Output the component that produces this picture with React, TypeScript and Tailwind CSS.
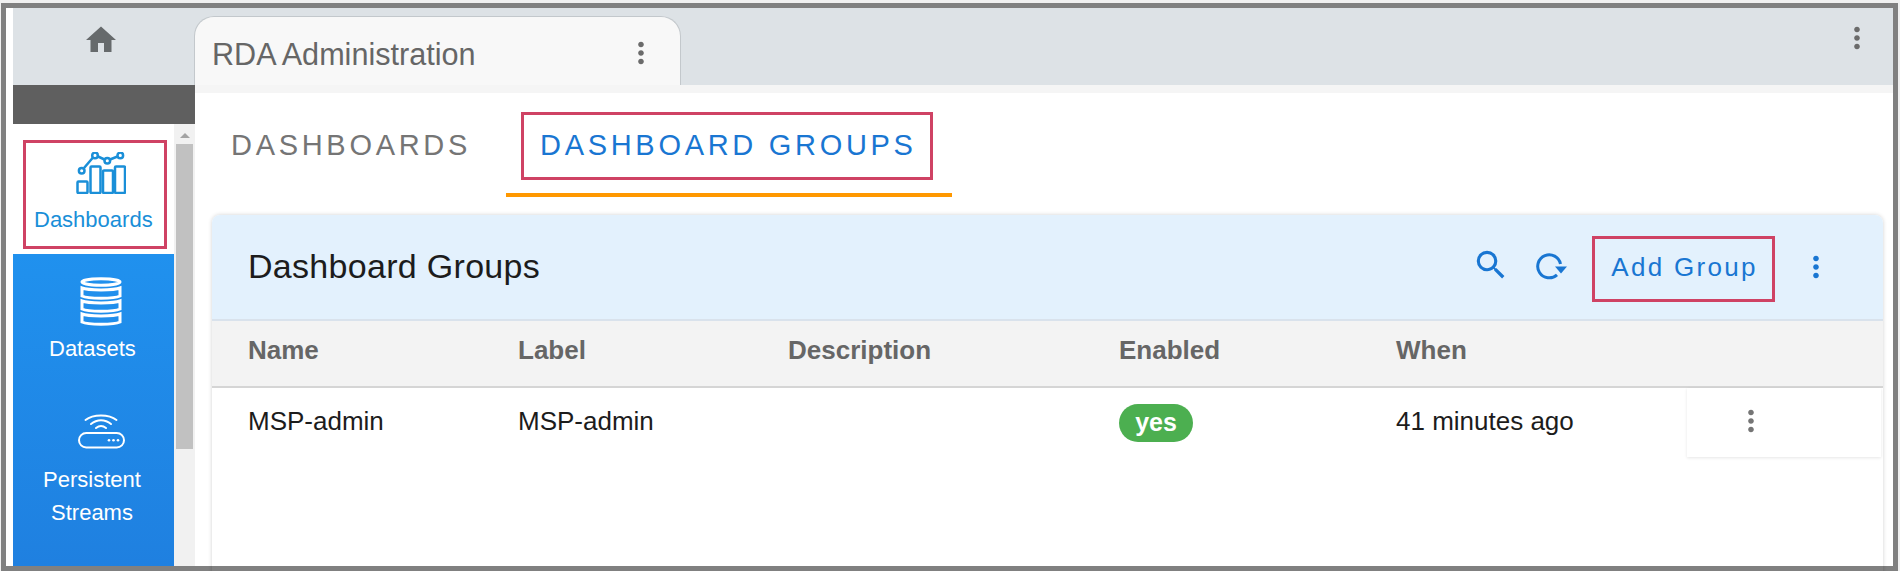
import { MdHome, MdMoreVert, MdSearch } from "react-icons/md";

const sans = "font-['Liberation_Sans',Arial,sans-serif]";

function ChartIcon() {
  return (
    <svg width="50" height="42" viewBox="0 0 50 42" fill="none" stroke="#1a8fd8" strokeWidth="2.5">
      <rect x="1.5" y="29.5" width="10" height="11.5" rx="1" />
      <rect x="14.5" y="14.5" width="10" height="26.5" rx="1" />
      <rect x="27" y="18.5" width="10" height="22.5" rx="1" />
      <rect x="39" y="14.5" width="10" height="26.5" rx="1" />
      <path d="M8 16 L17 5.5 M22 4.5 L28.5 7.5 M34 7.5 L41.5 4.5" />
      <circle cx="5.7" cy="18.7" r="2.8" />
      <circle cx="19" cy="3.4" r="2.8" />
      <circle cx="31.3" cy="8.7" r="2.8" />
      <circle cx="44.3" cy="3.4" r="2.8" />
    </svg>
  );
}

function DatabaseIcon() {
  return (
    <svg width="42" height="50" viewBox="0 0 42 50" fill="none" stroke="#fff" strokeWidth="3">
      <ellipse cx="21" cy="5" rx="19" ry="3.2" />
      {[11, 24, 37].map((y) => (
        <path key={y} d={`M2 ${y} C8 ${y + 2.5} 34 ${y + 2.5} 40 ${y} V${y + 8} C34 ${y + 11} 8 ${y + 11} 2 ${y + 8} Z`} />
      ))}
    </svg>
  );
}

function RouterIcon() {
  return (
    <svg width="48" height="36" viewBox="0 0 48 36" fill="none" stroke="#fff" strokeWidth="2" strokeLinecap="round">
      <path d="M7.5 7 C15 1 31 1 38.5 7" />
      <path d="M13 11 C19 6 27 6 33 11" />
      <path d="M18 15 C21 12.5 25 12.5 28 15" />
      <rect x="1" y="20" width="45" height="14.5" rx="7.25" />
      <circle cx="31" cy="27.3" r="1.3" fill="#fff" stroke="none" />
      <circle cx="35.5" cy="27.3" r="1.3" fill="#fff" stroke="none" />
      <circle cx="40" cy="27.3" r="1.3" fill="#fff" stroke="none" />
    </svg>
  );
}

function RefreshIcon() {
  return (
    <svg width="32" height="28" viewBox="0 0 32 28" fill="none">
      <path d="M21 21.8 A11.5 11.5 0 1 1 24.5 11" stroke="#1976d2" strokeWidth="3" />
      <path d="M19 13.5 H31 L25 20.5 Z" fill="#1976d2" />
    </svg>
  );
}

export default function App() {
  return (
    <div className={`h-[571px] w-[1900px] overflow-hidden bg-[#f0f0f0] pt-[3px] pl-[1px] pr-[2px] ${sans}`}>
      <div className="flex h-[568px] border-[5px] border-[#808080] bg-white pl-[7px]">
        {/* Left rail */}
        <aside className="flex w-[182px] flex-none flex-col">
          <div className="flex h-[77px] flex-none justify-center bg-[#dde2e6] pr-[7px] pt-[14px]">
            <MdHome size={36} className="text-[#666a6c]" />
          </div>
          <div className="h-[39px] flex-none bg-[#5f5f5f]" />
          <div className="flex min-h-0 flex-1">
            <nav className="flex w-[161px] flex-none flex-col">
              <div className="h-[130px] flex-none bg-white pl-[10px] pt-[16px]">
                <div className="flex h-[109px] w-[144px] flex-col border-[3px] border-[#cf4264] pl-[8px] pt-[9px]">
                  <div className="pl-[42px]">
                    <ChartIcon />
                  </div>
                  <span className="mt-[14px] text-[22px] leading-[24px] text-[#1a8fd8]">Dashboards</span>
                </div>
              </div>
              <div className="flex-1 bg-gradient-to-b from-[#2091ee] to-[#1f80e0] text-white">
                <div className="pl-[67px] pt-[23px]">
                  <DatabaseIcon />
                </div>
                <div className="mt-[10px] pl-[36px] text-[22px] leading-[24px]">Datasets</div>
                <div className="pl-[65px] pt-[52px]">
                  <RouterIcon />
                </div>
                <div className="mt-[14px] w-[158px] text-center text-[22px] leading-[33px]">
                  Persistent
                  <br />
                  Streams
                </div>
              </div>
            </nav>
            {/* Scrollbar */}
            <div className="flex w-[21px] flex-none flex-col bg-[#f1f1f1] pr-[2px] pl-[2px]">
              <div className="mx-auto mt-[9px] h-0 w-0 border-x-[5px] border-b-[5px] border-x-transparent border-b-[#a3a3a3]" />
              <div className="mt-[6px] h-[305px] bg-[#c1c1c1]" />
            </div>
          </div>
        </aside>

        {/* Main column */}
        <main className="flex min-w-0 flex-1 flex-col">
          <div className="flex h-[77px] flex-none items-end justify-between bg-[#dde2e6]">
            <div className="-ml-[1px] flex h-[69px] w-[487px] items-center justify-between rounded-t-[20px] border-x border-t border-[#c3c8cc] border-b-0 bg-[#f8f8f8] pl-[17px] pr-[22px]">
              <span className="pt-[5px] text-[30.6px] leading-[36px] text-[#666]">RDA Administration</span>
              <MdMoreVert size={34} className="mt-[4px] text-[#6b6b6b]" />
            </div>
            <MdMoreVert size={34} className="mb-[30px] mr-[19px] text-[#6b6b6b]" />
          </div>
          <div className="h-[8px] flex-none bg-[#f5f5f5]" />

          {/* Tabs */}
          <div className="flex h-[122px] flex-none">
            <div className="w-[311px] flex-none pl-[36px] pt-[31px] text-[29px] leading-[42px] tracking-[3.7px] text-[#757575]">
              DASHBOARDS
            </div>
            <div className="w-[446px] flex-none">
              <div className="ml-[15px] mt-[19px] flex h-[68px] w-[412px] items-center border-[3px] border-[#cf4264] pl-[16px] text-[29px] tracking-[3.7px] text-[#1976d2]">
                DASHBOARD GROUPS
              </div>
              <div className="mt-[13px] h-[4px] bg-[#ff9800]" />
            </div>
          </div>

          {/* Card */}
          <div className="ml-[17px] mr-[10px] h-[400px] flex-none overflow-hidden rounded-t-[8px] shadow-[0_0_4px_rgba(0,0,0,0.18)]">
            <div className="flex h-[106px] items-center justify-between border-b-2 border-[#d9e2ec] bg-[#e3f1fd] pl-[36px] pr-[50px]">
              <h2 className="pb-[2px] text-[34px] leading-[40px] tracking-[0.3px] text-[#1c1c1c]">Dashboard Groups</h2>
              <div className="flex items-center">
                <MdSearch size={38} className="mb-[4px] mr-[26px] text-[#1976d2]" />
                <div className="mr-[24px]">
                  <RefreshIcon />
                </div>
                <div className="mt-[4px] flex h-[66px] w-[183px] items-center justify-center border-[3px] border-[#cf4264] pb-[3px] pl-[2px] text-[26px] tracking-[2.3px] text-[#1976d2]">
                  Add Group
                </div>
                <MdMoreVert size={34} className="ml-[24px] text-[#1976d2]" />
              </div>
            </div>
            <div className="grid h-[67px] grid-cols-[270px_270px_331px_277px_1fr] items-center border-b-2 border-[#d5d5d5] bg-[#f3f3f3] pb-[6px] pl-[36px] text-[26px] font-bold text-[#666]">
              <span>Name</span>
              <span>Label</span>
              <span>Description</span>
              <span>Enabled</span>
              <span>When</span>
            </div>
            <div className="grid h-[69px] grid-cols-[270px_270px_331px_277px_291px_194px] items-center bg-white pl-[36px] text-[26px] text-[#1c1c1c]">
              <span className="-mt-[2px]">MSP-admin</span>
              <span className="-mt-[2px]">MSP-admin</span>
              <span />
              <span>
                <span className="inline-flex h-[38px] w-[74px] items-center justify-center rounded-[19px] bg-[#4caf50] pb-[2px] text-[25px] font-bold text-white">
                  yes
                </span>
              </span>
              <span className="-mt-[2px]">41 minutes ago</span>
              <div className="flex h-[69px] items-center pl-[47px] shadow-[0_1px_3px_rgba(0,0,0,0.1)]">
                <MdMoreVert size={34} className="-mt-[4px] text-[#757575]" />
              </div>
            </div>
          </div>
        </main>
      </div>
    </div>
  );
}
